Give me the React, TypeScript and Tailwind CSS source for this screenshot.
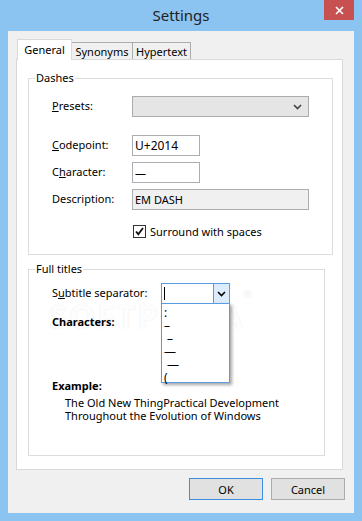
const font = { fontFamily: '"Segoe UI", "Noto Sans", sans-serif' };

function Chevron({ className }: { className?: string }) {
  return (
    <svg width="9" height="6" viewBox="0 0 9 6" className={className}>
      <path d="M1 1 L4.5 4.5 L8 1" fill="none" stroke="currentColor" strokeWidth="1.6" />
    </svg>
  );
}

function Field({ label, children }: { label: React.ReactNode; children: React.ReactNode }) {
  return (
    <div className="flex items-center h-[21px]">
      <div className="w-[80px] shrink-0">{label}</div>
      {children}
    </div>
  );
}

export default function App() {
  return (
    <div
      className="w-[362px] h-[521px] bg-[#8bc3f1] flex flex-col text-[11px] text-black"
      style={font}
    >
      {/* Title bar */}
      <div className="relative h-[31px] flex items-center justify-center shrink-0">
        <span className="text-[15px] text-[#222] leading-none">Settings</span>
        <div className="absolute right-[8px] top-0 w-[30px] h-[20px] bg-[#c75050] flex items-center justify-center">
          <svg width="9" height="9" viewBox="0 0 9 9">
            <path d="M1 1 L8 8 M8 1 L1 8" stroke="#fff" strokeWidth="1.6" />
          </svg>
        </div>
      </div>

      {/* Client */}
      <div className="flex-1 mx-[8px] mb-[8px] bg-[#f0f0f0] pt-[8px] flex flex-col">
        {/* Tabs */}
        <div className="flex items-end h-[20px] pl-[9px]">
          <div className="relative z-10 h-[21px] -mb-px w-[55px] bg-white border border-b-0 border-[#d9d9d9] flex items-center justify-center leading-none pb-[1px]">
            General
          </div>
          <div className="h-[17px] -ml-px w-[62px] bg-[#f0f0f0] border border-b-0 border-[#acacac] flex items-center justify-center leading-none">
            Synonyms
          </div>
          <div className="h-[17px] -ml-px w-[59px] bg-[#f0f0f0] border border-b-0 border-[#acacac] flex items-center justify-center leading-none">
            Hypertext
          </div>
        </div>

        {/* Panel */}
        <div className="ml-[8px] mr-[11px] h-[411px] bg-white border border-[#d9d9d9] pt-[10px]">
          {/* Dashes */}
          <fieldset className="ml-[11px] w-[297px] border border-[#dcdcdc]">
            <legend className="ml-[6px] px-[1px] leading-[16px]">Dashes</legend>
            <div className="px-[23px] pb-[16px] pt-[10px]">
              <Field
                label={
                  <span>
                    <u>P</u>resets:
                  </span>
                }
              >
                <div className="w-[177px] h-[21px] bg-[#e5e5e5] border border-[#acacac] flex items-center justify-end pr-[6px] text-[#444]">
                  <Chevron />
                </div>
              </Field>
              <div className="mt-[18px]">
                <Field
                  label={
                    <span>
                      <u>C</u>odepoint:
                    </span>
                  }
                >
                  <div className="w-[68px] h-[21px] border border-[#abadb3] bg-white flex items-center px-[2px] leading-none text-[12px]">
                    U+2014
                  </div>
                </Field>
              </div>
              <div className="mt-[6px]">
                <Field
                  label={
                    <span>
                      C<u>h</u>aracter:
                    </span>
                  }
                >
                  <div className="w-[68px] h-[21px] border border-[#abadb3] bg-white flex items-center px-[2px] leading-none">
                    —
                  </div>
                </Field>
              </div>
              <div className="mt-[6px]">
                <Field label={<span>Description:</span>}>
                  <div className="w-[177px] h-[21px] border border-[#abadb3] bg-[#f0f0f0] flex items-center px-[2px] leading-none">
                    EM DASH
                  </div>
                </Field>
              </div>
              <div className="mt-[15px] h-[13px] flex items-center pl-[81px] gap-[4px]">
                <div className="w-[13px] h-[13px] border border-[#333] bg-white flex items-center justify-center">
                  <svg width="11" height="11" viewBox="0 0 11 11">
                    <path d="M2 5.5 L4.3 8.2 L9 2" fill="none" stroke="#111" strokeWidth="1.8" />
                  </svg>
                </div>
                <span className="leading-none">Surround with spaces</span>
              </div>
            </div>
          </fieldset>

          {/* Full titles */}
          <fieldset className="mt-[6px] ml-[11px] w-[297px] border border-[#dcdcdc]">
            <legend className="ml-[6px] px-[1px] leading-[16px]">Full titles</legend>
            <div className="relative h-[178px] px-[23px] pt-[6px]">
              {/* watermark */}
              <div className="absolute z-0 left-[20px] top-[22px] text-[34px] font-bold tracking-[1px] text-[#fdfdfd] leading-none pointer-events-none select-none [text-shadow:0_0_1px_#e4e4e4]">
                SOFTPEDIA<sup className="text-[10px] align-top">®</sup>
              </div>
              <div className="relative z-10">
                <div className="flex items-center h-[21px]">
                  <div className="w-[109px] shrink-0">
                    S<u>u</u>btitle separator:
                  </div>
                  <div className="relative">
                    <div className="w-[69px] h-[21px] border border-[#569de5] bg-white flex">
                      <div className="flex-1 flex items-center pl-[2px]">
                        <div className="w-px h-[13px] bg-black" />
                      </div>
                      <div className="w-[16px] bg-[#dcecfc] border-l border-[#569de5] flex items-center justify-center">
                        <Chevron />
                      </div>
                    </div>
                    {/* Dropdown list */}
                    <div className="absolute left-0 top-[20px] z-20 w-[69px] h-[80px] border border-[#569de5] bg-white shadow-[2px_2px_3px_rgba(0,0,0,0.35)] flex flex-col pl-[2px] pt-[2px] leading-[13px] text-[12px]">
                      <span>:</span>
                      <span>–</span>
                      <span>&nbsp;–</span>
                      <span>—</span>
                      <span>&nbsp;—</span>
                      <span>(</span>
                    </div>
                  </div>
                </div>
                <div className="mt-[10px] font-bold leading-[16px]">Characters:</div>
                <div className="mt-[48px] font-bold leading-[16px]">Example:</div>
                <div className="pl-[13px] mt-[2px] leading-[13px]">
                  <div>The Old New ThingPractical Development</div>
                  <div>Throughout the Evolution of Windows</div>
                </div>
              </div>
            </div>
          </fieldset>
        </div>

        {/* Buttons */}
        <div className="flex justify-end gap-[8px] pr-[9px] mt-[8px]">
          <button className="w-[74px] h-[22px] bg-[#e1e1e1] border border-[#3c8fe0] leading-none">
            OK
          </button>
          <button className="w-[74px] h-[22px] bg-[#e1e1e1] border border-[#adadad] leading-none">
            Cancel
          </button>
        </div>
      </div>
    </div>
  );
}
